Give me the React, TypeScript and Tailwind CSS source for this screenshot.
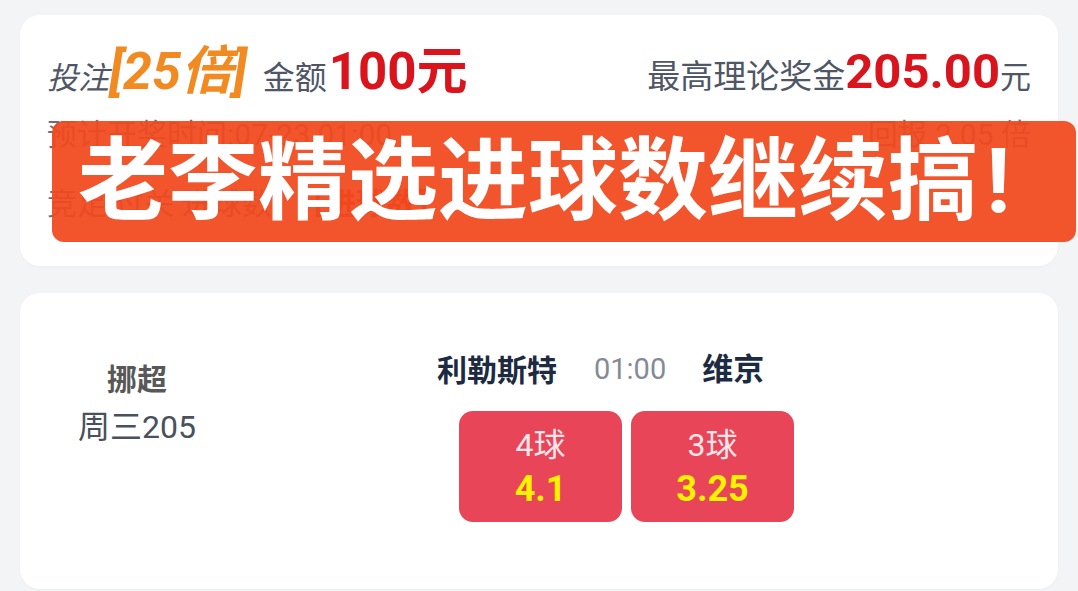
import React from "react";

const font = { fontFamily: 'Roboto, "Noto Sans CJK SC", sans-serif' };

type Pick = { label: string; odds: string };

const picks: Pick[] = [
  { label: "4球", odds: "4.1" },
  { label: "3球", odds: "3.25" },
];

const OrderCard = () => (
  <div className="relative h-[251px] rounded-[20px] bg-white px-[27px] pt-[25px] shadow-[0_1px_3px_rgba(0,0,0,0.03)]">
    {/* stake and max payout */}
    <div className="flex items-center justify-between h-[64px]">
      <div className="flex items-baseline">
        <span className="text-[31px] italic text-[#4f5666]">投注</span>
        <span className="text-[52px] font-bold italic text-[#f28a22]">[25倍]</span>
        <span className="ml-[16px] text-[32px] text-[#4f5666]">金额</span>
        <span className="ml-[2px] text-[51px] font-bold text-[#d9141c]">100元</span>
      </div>
      <div className="flex items-baseline">
        <span className="text-[33px] text-[#4f5666]">最高理论奖金</span>
        <span className="text-[49px] font-bold text-[#d9141c]">205.00</span>
        <span className="text-[31px] text-[#4f5666]">元</span>
      </div>
    </div>
    <div className="flex items-center justify-between h-[60px] text-[30px] text-[#6b7078]">
      <span>预计开奖时间:07-23 01:00</span>
      <span>回报 2.05 倍</span>
    </div>
    <div className="mt-[14px] flex items-center h-[50px] text-[30px] text-[#6b7078]">
      <span>竞足 过关 进球数</span>
      <span className="ml-[24px] text-[#e0251c] font-bold">【进球数】</span>
    </div>

    {/* headline banner */}
    <div className="absolute left-[32px] right-[-18px] top-[106px] h-[121px] rounded-[12px] bg-[#f1491f]/[0.94] flex items-center pl-[26px]">
      <span className="text-[90px] font-bold text-white leading-none">老李精选进球数继续搞</span>
      <span className="ml-[8px] text-[90px] font-bold text-white leading-none">!</span>
    </div>
  </div>
);

const MatchCard = () => (
  <div className="h-[296px] rounded-[20px] bg-white flex shadow-[0_1px_3px_rgba(0,0,0,0.03)]">
    <div className="w-[234px] pt-[64px] flex flex-col items-center">
      <span className="text-[30px] leading-[46px] font-bold text-[#585858]">挪超</span>
      <span className="text-[32px] leading-[48px] text-[#4a505c]">周三205</span>
    </div>
    <div className="ml-[183px] pt-[57px] flex flex-col">
      <div className="flex items-center h-[40px]">
        <span className="text-[30px] font-bold text-[#1c2a42]">利勒斯特</span>
        <span className="ml-[37px] text-[29px] text-[#858b94]">01:00</span>
        <span className="ml-[36px] text-[31px] font-bold text-[#1c2a42]">维京</span>
      </div>
      <div className="mt-[21px] ml-[22px] flex gap-[9px]">
        {picks.map((p) => (
          <div
            key={p.label}
            className="w-[163px] h-[111px] rounded-[14px] bg-[#e84559] flex flex-col items-center justify-center"
          >
            <span className="text-[32px] leading-[44px] text-[#fde6ea]">{p.label}</span>
            <span className="text-[36px] leading-[44px] font-bold text-[#fff200]">{p.odds}</span>
          </div>
        ))}
      </div>
    </div>
  </div>
);

export default function App() {
  return (
    <div className="w-[1078px] h-[591px] overflow-hidden bg-[#f3f4f6] px-[20px] pt-[15px]" style={font}>
      <OrderCard />
      <div className="h-[27px]" />
      <MatchCard />
    </div>
  );
}
